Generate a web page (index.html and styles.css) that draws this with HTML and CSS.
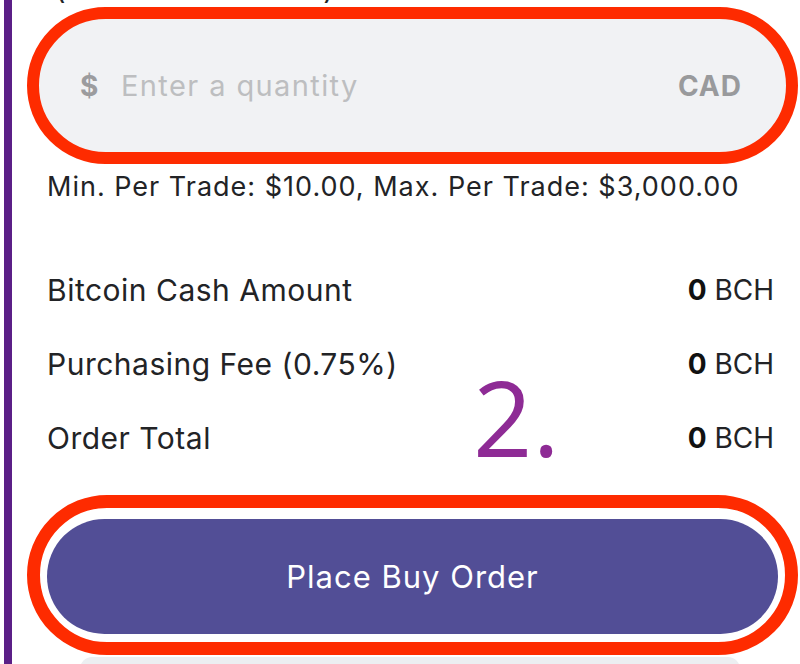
FILE: index.html
```html
<!DOCTYPE html>
<html>
<head>
<meta charset="utf-8">
<link rel="stylesheet" href="styles.css">
</head>
<body>
<div class="frame">
  <div class="bar"></div>
  <div class="content">
    <div class="caption">(Canadian Dollars)</div>
    <div class="ring input-ring">
      <span class="cur">$</span>
      <span class="placeholder">Enter a quantity</span>
      <span class="unit">CAD</span>
    </div>
    <div class="limits">Min. Per Trade: $10.00, Max. Per Trade: $3,000.00</div>
    <div class="rows">
      <div class="row"><span class="label">Bitcoin Cash Amount</span><span class="val"><b>0</b> BCH</span></div>
      <div class="row"><span class="label">Purchasing Fee (0.75%)</span><span class="val"><b>0</b> BCH</span></div>
      <div class="row"><span class="label">Order Total</span><span class="val"><b>0</b> BCH</span></div>
      <div class="step">2.</div>
    </div>
    <div class="ring btn-ring">
      <div class="btn">Place Buy Order</div>
    </div>
    <div class="next"></div>
  </div>
</div>
</body>
</html>
```
FILE: styles.css
```css
html, body {
  margin: 0;
  padding: 0;
  background: #ffffff;
  overflow: hidden;
}
body {
  width: 800px;
  height: 664px;
  font-family: Inter, "Noto Sans", sans-serif;
  color: #222326;
}
.frame {
  display: flex;
  height: 664px;
}
.bar {
  width: 8px;
  margin-left: 4px;
  background: #5b1f87;
  flex: none;
}
.content {
  width: 771px;
  margin-left: 15px;
  display: flex;
  flex-direction: column;
}
.content > * {
  flex: none;
}
.caption {
  margin-top: -26px;
  height: 33px;
  line-height: 30px;
  font-size: 29px;
  letter-spacing: 1.5px;
  padding-left: 28px;
  white-space: nowrap;
}
.ring {
  box-sizing: border-box;
  border: 12px solid #fe2b00;
  border-radius: 82px;
}
.input-ring {
  height: 157px;
  background: #f1f2f4;
  display: flex;
  align-items: center;
  padding: 0 44px 0 41px;
}
.cur {
  font-size: 28px;
  font-weight: 700;
  color: #9c9c9e;
  width: 41px;
}
.placeholder {
  flex: 1;
  font-size: 29px;
  letter-spacing: 1.4px;
  color: #bdbec0;
}
.unit {
  font-size: 28px;
  font-weight: 700;
  letter-spacing: 1px;
  color: #999a9c;
}
.limits {
  margin-top: 5px;
  padding-left: 20px;
  font-size: 27px;
  letter-spacing: 1px;
  line-height: 36px;
  white-space: nowrap;
}
.rows {
  position: relative;
  margin-top: 48px;
  padding: 0 24px 0 20px;
}
.row {
  display: flex;
  justify-content: space-between;
  height: 74px;
  line-height: 74px;
}
.label {
  font-size: 30px;
  letter-spacing: 0.5px;
}
.val {
  font-size: 28px;
}
.row b {
  font-weight: 700;
  color: #111;
}
.step {
  position: absolute;
  left: 446px;
  top: 112px;
  font-family: "Open Sans", sans-serif;
  font-size: 104px;
  line-height: 1;
  color: #8e2b95;
}
.btn-ring {
  margin-top: 20px;
  height: 160px;
  border-width: 13px;
  padding: 11px 7px 8px 7px;
  background: #fff;
}
.btn {
  height: 115px;
  border-radius: 58px;
  background: #524e96;
  color: #ffffff;
  font-size: 31px;
  letter-spacing: 1px;
  display: flex;
  align-items: center;
  justify-content: center;
}
.next {
  margin: 2px 58px 0 53px;
  height: 20px;
  border-radius: 12px 12px 0 0;
  background: #eceef1;
}
```
